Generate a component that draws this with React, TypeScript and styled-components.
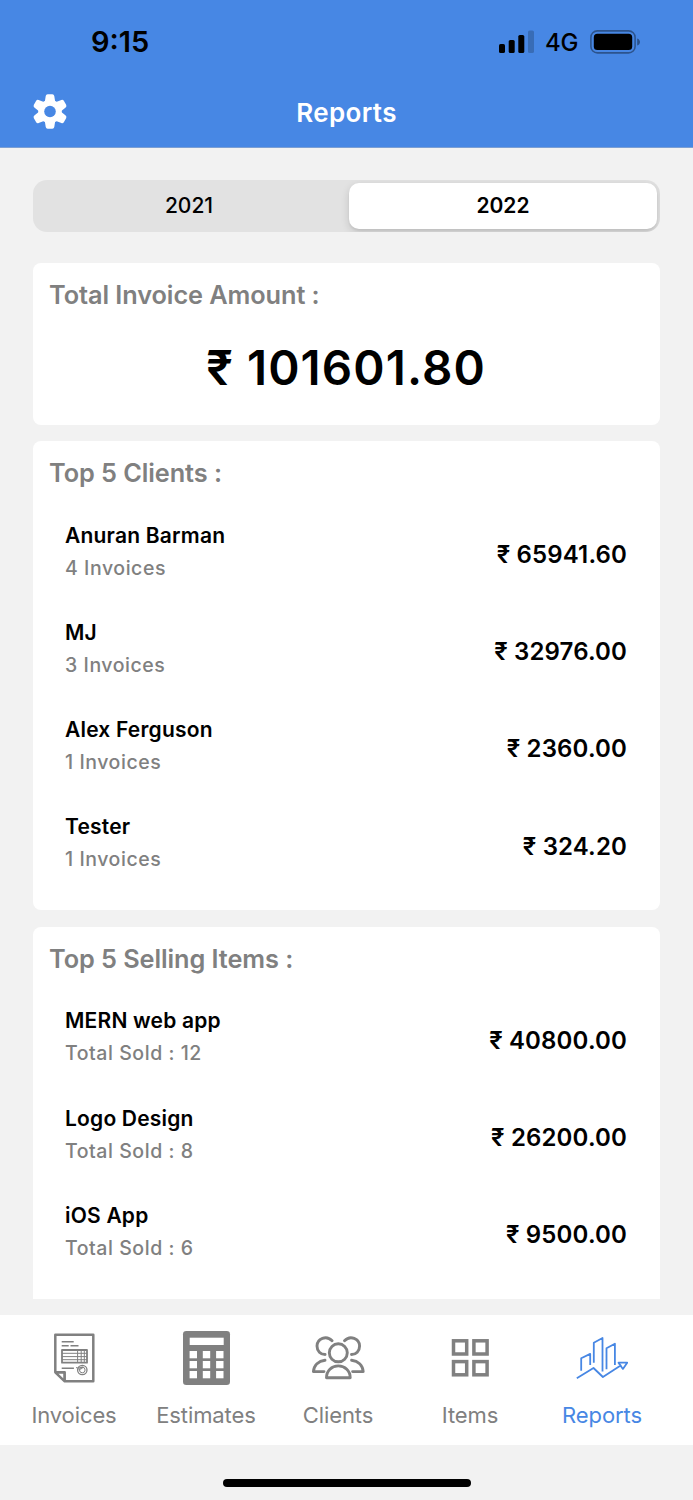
import React from "react";
import styled, { createGlobalStyle } from "styled-components";

const Global = createGlobalStyle`
  * { box-sizing: border-box; }
  body {
    margin: 0;
    background: #f2f2f2;
    font-family: Inter, "Liberation Sans", sans-serif;
    color: #000;
  }
`;

const Screen = styled.div`
  width: 693px;
  height: 1500px;
  display: flex;
  flex-direction: column;
  overflow: hidden;
  white-space: nowrap;
  background: #f2f2f2;
`;

const Header = styled.header`
  height: 148px;
  flex: none;
  background: #4787e4;
  border-bottom: 1px solid #7c9fd3;
`;

const StatusBar = styled.div`
  height: 76px;
  padding: 7px 52px 0 91px;
  display: flex;
  align-items: center;
  justify-content: space-between;
`;

const Clock = styled.span`
  font-size: 29px;
  font-weight: 600;
`;

const StatusIcons = styled.div`
  display: flex;
  align-items: center;
`;

const Network = styled.span`
  width: 55px;
  padding: 2px 0 0 10px;
  font-size: 24px;
  font-weight: 500;
  letter-spacing: -0.3px;
`;

const NavBar = styled.div`
  height: 71px;
  padding: 0 32px;
  display: grid;
  grid-template-columns: 36px 1fr 36px;
  align-items: center;
`;

const NavTitle = styled.h1`
  margin: 1px 0 0;
  text-align: center;
  color: #fff;
  font-size: 26px;
  font-weight: 600;
  letter-spacing: 0.35px;
`;

const Content = styled.main`
  height: 1151px;
  flex: none;
  padding: 32px 33px 0;
  overflow: hidden;
`;

const Segments = styled.div`
  height: 51.5px;
  padding: 3px;
  display: grid;
  grid-template-columns: 306px 308px;
  justify-content: space-between;
  overflow: hidden;
  border-radius: 14px;
  background: #e2e2e2;
`;

const Segment = styled.button<{ $active?: boolean }>`
  padding: 0;
  border: 0;
  border-radius: 10px;
  background: ${(p) => (p.$active ? "#fff" : "transparent")};
  box-shadow: ${(p) => (p.$active ? "0 3px 9px rgba(0,0,0,.14), 0 2px 2px rgba(0,0,0,.05)" : "none")};
  font: ${(p) => (p.$active ? 600 : 500)} 21px Inter, sans-serif;
  color: #000;
`;

const Card = styled.section`
  margin-top: 16.5px;
  padding: 0 33px 15.5px 32px;
  border-radius: 8px;
  background: #fff;

  &:last-child {
    padding-bottom: 32px;
  }
`;

const TotalCard = styled(Card)`
  height: 161.5px;
  margin-top: 31.5px;
  padding-bottom: 0;
`;

const CardTitle = styled.h2`
  height: 65px;
  margin: 0 0 0 -16px;
  line-height: 64px;
  font-size: 25.3px;
  font-weight: 600;
  letter-spacing: -0.07px;
  color: #808080;
`;

const Total = styled.div`
  line-height: 80px;
  text-align: center;
  font-size: 47.5px;
  font-weight: 600;
  letter-spacing: 1.1px;
`;

const Row = styled.div`
  height: 97.2px;
  display: flex;
  align-items: center;
  justify-content: space-between;
`;

const Label = styled.div`
  display: flex;
  flex-direction: column;
  padding-bottom: 6px;
`;

const Name = styled.span`
  line-height: 33px;
  font-size: 21px;
  font-weight: 600;
  letter-spacing: 0.2px;
`;

const Detail = styled.span`
  line-height: 33px;
  font-size: 19.5px;
  font-weight: 500;
  letter-spacing: 0.55px;
  color: #808080;
`;

const Amount = styled.span`
  font-size: 24px;
  font-weight: 600;
  letter-spacing: 0.15px;
`;

const TabBar = styled.nav`
  height: 129.5px;
  flex: none;
  margin-top: 16px;
  padding: 13px 25px 0 8px;
  display: flex;
  background: #fff;
`;

const Tab = styled.a<{ $active?: boolean }>`
  flex: 1;
  display: flex;
  flex-direction: column;
  align-items: center;
  color: ${(p) => (p.$active ? "#4787e4" : "#808080")};
`;

const TabLabel = styled.span`
  margin-top: 11px;
  line-height: 32px;
  font-size: 22px;
  font-weight: 400;
  letter-spacing: -0.1px;
`;

const HomeArea = styled.div`
  flex: 1;
  padding-top: 34.5px;
  display: flex;
  justify-content: center;
`;

const HomeIndicator = styled.div`
  width: 248px;
  height: 8px;
  border-radius: 4px;
  background: #000;
`;

const Glyph = styled.svg`
  display: block;
  flex: none;
  fill: none;
  stroke: currentColor;
  stroke-linejoin: round;
`;

const SignalIcon = () => (
  <svg width="36" height="24" viewBox="0 0 36 24">
    <rect x="0" y="14" width="6" height="9" rx="1.6" />
    <rect x="9.7" y="10" width="6" height="13" rx="1.6" />
    <rect x="19.3" y="5" width="6" height="18" rx="1.6" />
    <rect x="29" y="0.5" width="6" height="22.5" rx="1.6" opacity="0.2" />
  </svg>
);

const BatteryIcon = () => (
  <svg width="51" height="24" viewBox="0 0 51 24">
    <rect x="0.9" y="0.9" width="44.2" height="22" rx="6.5" fill="none" stroke="#000" strokeOpacity="0.38" strokeWidth="1.6" />
    <rect x="3.8" y="3.8" width="38.4" height="16.3" rx="3.6" />
    <path d="M47.2 8.4c3.7 1 3.7 6 0 7z" opacity="0.4" />
  </svg>
);

const GearIcon = () => (
  <svg width="36" height="36" viewBox="-18 -17.5 36 36">
    <mask id="hub" maskUnits="userSpaceOnUse" x="-18" y="-18" width="36" height="36">
      <rect x="-18" y="-18" width="36" height="36" fill="#fff" />
      <circle r="5.8" fill="#000" />
    </mask>
    <g mask="url(#hub)" fill="#fff" stroke="#fff" strokeWidth="4" strokeLinejoin="round">
      <circle r="9.8" />
      {[0, 60, 120, 180, 240, 300].map((a) => (
        <path key={a} transform={`rotate(${a})`} d="M-2.3-15.3h4.6L3.3-9h-6.6z" />
      ))}
    </g>
  </svg>
);

const InvoiceIcon = () => (
  <Glyph width="60" height="60" viewBox="0 0 60 60" strokeWidth="1.4">
    <path strokeWidth="2.5" d="M11.3 6.7h38v46.6H20.7l-9.4-9zM11.3 44.3h9.4v9" />
    <path d="M13 45l7 7v-7z" strokeWidth="1" />
    <path d="M17.7 13.7h12M17.7 17.7h7M26.5 17.7h8M17.7 40.3h12.2" strokeWidth="1.6" />
    <path d="M18 22h25v12.7H18z" strokeWidth="1.8" />
    <path d="M18 25.3h25M18 28.6h25M18 31.7h25M33.6 22v12.7M37.2 22v12.7M40.3 22v12.7" strokeWidth="1" />
    <circle cx="38.3" cy="42" r="4.7" strokeWidth="1.3" />
    <circle cx="38.3" cy="42" r="2.8" strokeWidth="1" />
    <path d="M32 39.6c2.5 1 4-.8 7.2-.4-1.8 2-3.2 2.2-5 1.7" strokeWidth="1" />
  </Glyph>
);

const CalculatorIcon = () => (
  <svg width="60" height="60" viewBox="0 0 60 60">
    <rect x="7" y="3" width="47" height="54" rx="3.3" fill="currentColor" />
    <rect x="13.7" y="9.7" width="34" height="7.3" fill="#fff" />
    {[23, 33, 43].map((y) =>
      [13.6, 26.8, 40.1].map((x) => <rect key={`${x}-${y}`} x={x} y={y} width="7.4" height="7.3" fill="#fff" />)
    )}
  </svg>
);

const ClientsIcon = () => (
  <Glyph width="60" height="60" viewBox="0 0 60 60" strokeWidth="2.9" strokeLinecap="round">
    <circle cx="30.3" cy="24.8" r="9" />
    <path d="M18.5 49.8h23.7c0-7-5.2-11.9-11.9-11.9s-11.800 4.900-11.800 11.900z" />
    <path d="M24.1 12.8C18.5 6.8 9 10.5 9 18.1c0 5 3.6 8.400 8.100 8.400M17 32.200C10.500 33 6 37.300 5.400 43.600H16" />
    <path d="M36.500 12.800C42.100 6.800 51.600 10.500 51.600 18.100c0 5-3.600 8.400-8.100 8.400M43.600 32.200C50.100 33 54.600 37.300 55.200 43.600H44.600" />
  </Glyph>
);

const ItemsIcon = () => (
  <Glyph width="60" height="60" viewBox="0 0 60 60" strokeWidth="3.5">
    {[12.800, 33.600].map((y) =>
      [13.500, 33.900].map((x) => (
        <rect key={`${x}-${y}`} x={x} y={y} width="13.2" height="13.2" strokeLinejoin="miter" />
      ))
    )}
  </Glyph>
);

const ReportsIcon = () => (
  <Glyph width="60" height="60" viewBox="0.5 0 60 60" strokeWidth="1.8">
    <path d="M9.700 42.700V30.300l9-4.400V37M22.300 34.700v-20L31 10v33.400M35 41.300v-21l8.400-4.600V37M5.300 50.300L22 40l9.400 9 18.500-12M47 34.700h8.700l-4.300 6.200z" />
  </Glyph>
);

const clients = [
  ["Anuran Barman", "4 Invoices", "₹ 65941.60"],
  ["MJ", "3 Invoices", "₹ 32976.00"],
  ["Alex Ferguson", "1 Invoices", "₹ 2360.00"],
  ["Tester", "1 Invoices", "₹ 324.20"],
];

const items = [
  ["MERN web app", "Total Sold : 12", "₹ 40800.00"],
  ["Logo Design", "Total Sold : 8", "₹ 26200.00"],
  ["iOS App", "Total Sold : 6", "₹ 9500.00"],
];

const tabs = [
  { label: "Invoices", icon: <InvoiceIcon /> },
  { label: "Estimates", icon: <CalculatorIcon /> },
  { label: "Clients", icon: <ClientsIcon /> },
  { label: "Items", icon: <ItemsIcon /> },
  { label: "Reports", icon: <ReportsIcon />, active: true },
];

const Ranking = ({ title, rows }: { title: string; rows: string[][] }) => (
  <Card>
    <CardTitle>{title}</CardTitle>
    {rows.map(([name, detail, amount]) => (
      <Row key={name}>
        <Label>
          <Name>{name}</Name>
          <Detail>{detail}</Detail>
        </Label>
        <Amount>{amount}</Amount>
      </Row>
    ))}
  </Card>
);

export default function App() {
  return (
    <Screen>
      <Global />
      <Header>
        <StatusBar>
          <Clock>9:15</Clock>
          <StatusIcons>
            <SignalIcon />
            <Network>4G</Network>
            <BatteryIcon />
          </StatusIcons>
        </StatusBar>
        <NavBar>
          <GearIcon />
          <NavTitle>Reports</NavTitle>
        </NavBar>
      </Header>
      <Content>
        <Segments>
          <Segment>2021</Segment>
          <Segment $active>2022</Segment>
        </Segments>
        <TotalCard>
          <CardTitle>Total Invoice Amount :</CardTitle>
          <Total>₹ 101601.80</Total>
        </TotalCard>
        <Ranking title="Top 5 Clients :" rows={clients} />
        <Ranking title="Top 5 Selling Items :" rows={items} />
      </Content>
      <TabBar>
        {tabs.map((t) => (
          <Tab key={t.label} $active={t.active}>
            {t.icon}
            <TabLabel>{t.label}</TabLabel>
          </Tab>
        ))}
      </TabBar>
      <HomeArea>
        <HomeIndicator />
      </HomeArea>
    </Screen>
  );
}
